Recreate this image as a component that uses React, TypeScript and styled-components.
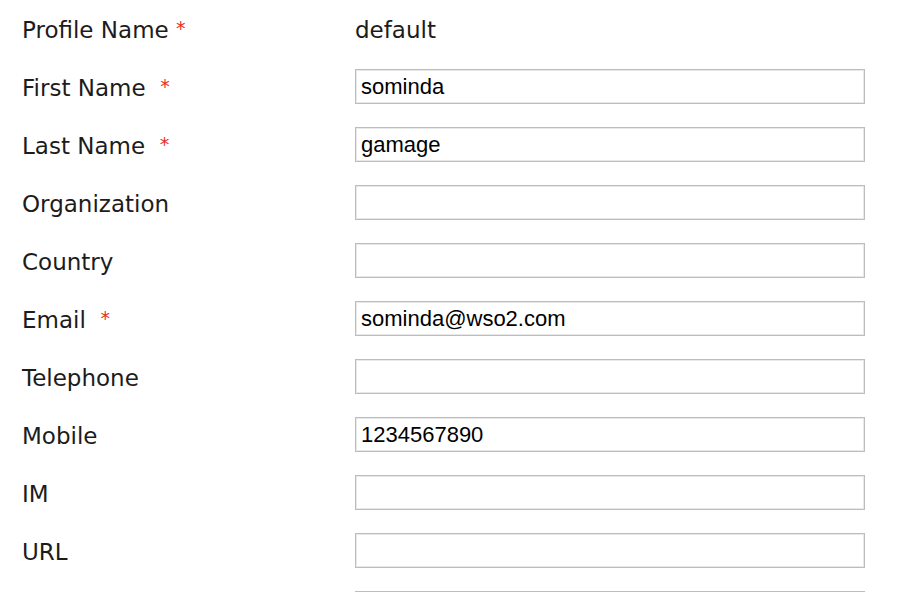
import React from "react";
import styled, { createGlobalStyle } from "styled-components";

const GlobalStyle = createGlobalStyle`
  html, body {
    margin: 0;
    padding: 0;
    background: #ffffff;
    overflow: hidden;
  }
`;

const Form = styled.div`
  display: flex;
  flex-direction: column;
  gap: 23px;
  padding: 11px 0 0 22px;
  font-family: "DejaVu Sans", "Noto Sans", sans-serif;
`;

const Row = styled.div`
  display: grid;
  grid-template-columns: 333px 510px;
  align-items: center;
  height: 35px;
`;

const Label = styled.label`
  padding-top: 2px;
  font-size: 23px;
  color: #1c1c1c;
  white-space: pre;
`;

const Required = styled.span`
  color: #e8302a;
  font-size: 19px;
  vertical-align: 3px;
`;

const Value = styled.div`
  padding-top: 2px;
  font-size: 23px;
  color: #1c1c1c;
`;

const Input = styled.input`
  box-sizing: border-box;
  width: 510px;
  height: 35px;
  margin: 0;
  padding: 0 5px;
  border: 1px solid #bdbdbd;
  box-shadow: inset 0 0 0 1px #e8e8e8;
  outline: none;
  background: #ffffff;
  font-family: "Liberation Sans", Arial, sans-serif;
  font-size: 22px;
  color: #000000;
`;

type Field = {
  label: string;
  required?: boolean;
  value?: string;
};

const fields: Field[] = [
  { label: "First Name", required: true, value: "sominda" },
  { label: "Last Name", required: true, value: "gamage" },
  { label: "Organization" },
  { label: "Country" },
  { label: "Email", required: true, value: "sominda@wso2.com" },
  { label: "Telephone" },
  { label: "Mobile", value: "1234567890" },
  { label: "IM" },
  { label: "URL" },
  { label: "" },
];

const App: React.FC = () => {
  return (
    <>
      <GlobalStyle />
      <Form>
        <Row>
          <Label>
            Profile Name <Required>*</Required>
          </Label>
          <Value>default</Value>
        </Row>
        {fields.map((f, i) => (
          <Row key={i}>
            <Label>
              {f.label}
              {f.required && (
                <>
                  {"  "}
                  <Required>*</Required>
                </>
              )}
            </Label>
            <Input type="text" defaultValue={f.value ?? ""} />
          </Row>
        ))}
      </Form>
    </>
  );
};

export default App;
